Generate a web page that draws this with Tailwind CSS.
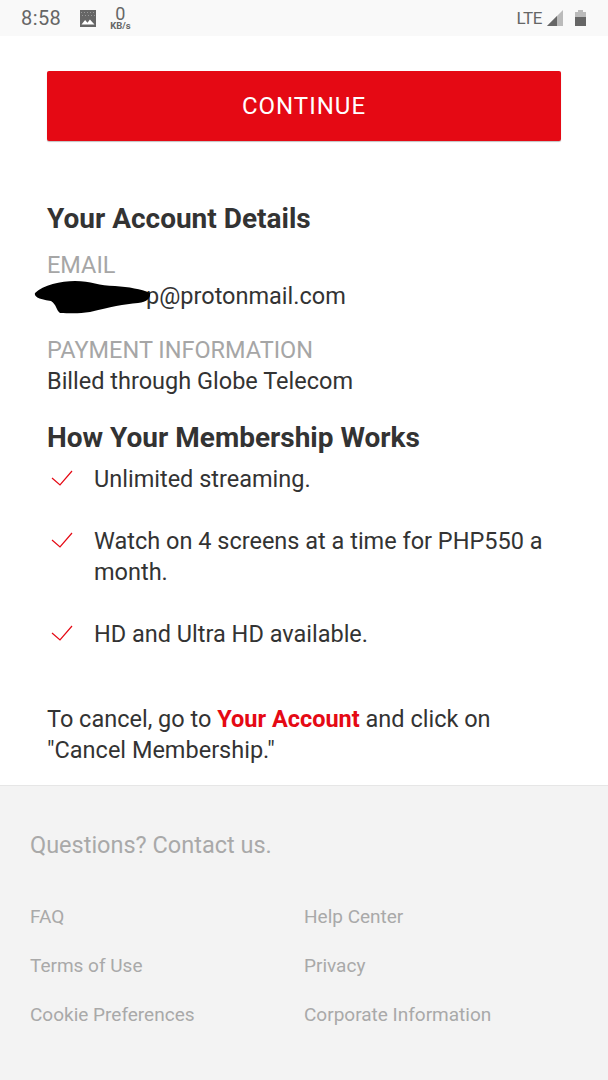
<!DOCTYPE html>
<html><head><meta charset="utf-8"><script src="https://cdn.jsdelivr.net/npm/@tailwindcss/browser@4"></script></head>
<body class="m-0 bg-white">
<div class="w-[608px] h-[1080px] overflow-hidden flex flex-col font-['Roboto',sans-serif] text-[#333] antialiased">
  <div class="h-[36px] bg-[#f9f9f9] flex items-center relative text-[#666]">
    <span class="ml-[21px] text-[20px] leading-none tracking-[0.4px]">8:58</span>
    <svg class="ml-[19px]" width="16" height="17" viewBox="0 0 16 17"><path fill="#666" d="M0 0h16v17H0z"/><path fill="#999" d="M1 2h1v1H1zM4 2h1v1H4zM7 2h1v1H7zM10 2h1v1h-1zM13 2h1v1h-1zM2 5h1v1H2zM5 5h1v1H5zM8 5h1v1H8zM11 5h1v1h-1zM14 5h1v1h-1z"/><path fill="#fff" d="M1.5 14.5l3.6-4.5 2.4 2.8 2.4-3.3 4.6 5z"/></svg>
    <div class="ml-[14px] flex flex-col items-center leading-none mt-[1px]">
      <span class="text-[18px] h-[13px] leading-[13px]">0</span>
      <span class="text-[9.5px] font-bold mt-[1px] h-[9px] leading-[9px]">KB/s</span>
    </div>
    <div class="ml-auto flex items-center mr-[22px]">
      <span class="text-[17px] leading-none tracking-[-0.4px]">LTE</span>
      <svg class="ml-[4px]" width="18" height="18" viewBox="0 0 18 18"><path fill="#bbb" d="M17 1v16H1z"/><path fill="#666" d="M11 7v10H1z"/></svg>
      <svg class="ml-[11px]" width="11" height="18" viewBox="0 0 11 18"><path fill="#bbb" d="M3 1h5v2h3v6H0V3h3z"/><path fill="#666" d="M0 8h11v9H0z"/></svg>
    </div>
  </div>

  <main class="flex-none h-[749px] px-[47px] pt-[35px]">
    <button class="block w-[514px] h-[70px] bg-[#e50914] rounded-[2px] text-white text-[24px] shadow-[0_1px_1px_rgba(0,0,0,0.25)] tracking-[1px]">CONTINUE</button>
    <h2 class="mt-[60px] text-[28px] leading-[36px] font-bold text-[#333]">Your Account Details</h2>
    <p class="mt-[13px] text-[23.5px] leading-[31px] text-[#a6a6a6]">EMAIL</p>
    <p class="relative text-[23.5px] leading-[31px] text-[#333] pl-[99px]">p@protonmail.com
      <svg class="absolute left-[-14px] top-[-5px]" width="120" height="40" viewBox="0 0 120 40"><path fill="#000" d="M2 17C10 9 28 5 42 5c16 0 24 5 40 5 14 1 26 3 35 7 1 5-3 9-12 10-14 1-28 4-48 9-12 2-22 1-30 1-4-3-3-8-9-12C4 23 1 20 2 17z"/></svg>
    </p>
    <p class="mt-[23px] text-[23.5px] leading-[31px] text-[#a6a6a6]">PAYMENT INFORMATION</p>
    <p class="text-[23.5px] leading-[31px] text-[#333]">Billed through Globe Telecom</p>
    <h2 class="mt-[23px] text-[28px] leading-[36px] font-bold text-[#333]">How Your Membership Works</h2>
    <ul class="mt-[8px] text-[23.5px] leading-[31px]">
      <li class="flex"><svg class="ml-[2px] mt-[5px] w-[24px] h-[18px] flex-none" viewBox="0 0 24 18"><path d="M3 9l8 7L23 2" fill="none" stroke="#e50914" stroke-width="1.2"/></svg><span class="ml-[21px]">Unlimited streaming.</span></li>
      <li class="flex mt-[31px]"><svg class="ml-[2px] mt-[5px] w-[24px] h-[18px] flex-none" viewBox="0 0 24 18"><path d="M3 9l8 7L23 2" fill="none" stroke="#e50914" stroke-width="1.2"/></svg><span class="ml-[21px]">Watch on 4 screens at a time for PHP550 a month.</span></li>
      <li class="flex mt-[31px]"><svg class="ml-[2px] mt-[5px] w-[24px] h-[18px] flex-none" viewBox="0 0 24 18"><path d="M3 9l8 7L23 2" fill="none" stroke="#e50914" stroke-width="1.2"/></svg><span class="ml-[21px]">HD and Ultra HD available.</span></li>
    </ul>
    <p class="mt-[54px] text-[23.5px] leading-[31px]">To cancel, go to <b class="font-bold text-[#e50914]">Your Account</b> and click on "Cancel Membership."</p>
  </main>

  <footer class="flex-1 bg-[#f3f3f3] border-t border-[#e6e6e6] pl-[30px] pt-[44px] text-[#a9a9a9]">
    <p class="text-[23.5px] leading-[31px]">Questions? Contact us.</p>
    <div class="mt-[43px] grid grid-cols-[274px_1fr] gap-y-[24px] text-[19px] leading-[25px]">
      <span>FAQ</span><span>Help Center</span>
      <span>Terms of Use</span><span>Privacy</span>
      <span>Cookie Preferences</span><span>Corporate Information</span>
    </div>
  </footer>
</div>
</body></html>
